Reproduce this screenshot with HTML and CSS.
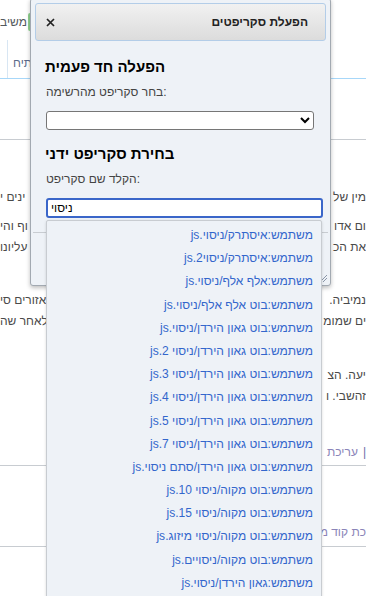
FILE: index.html
```html
<!DOCTYPE html>
<html lang="he">

<head>
  <meta charset="UTF-8">
  <meta name="viewport" content="width=device-width, initial-scale=1.0">
  <title>הפעלת סקריפטים</title>
  <link rel="stylesheet" href="styles.css">
</head>

<body>

  <!-- the wiki page behind the dialog -->
  <div class="page" dir="rtl">
    <div class="personal">
      <span class="badge">5</span>
      <span class="personal-link">משיב</span>
    </div>

    <div class="tabs">
      <span class="tab">פתיח</span>
    </div>

    <div class="title-rule"></div>

    <div class="para first">
      <div class="row"><span>מין של</span><span>ינים י</span></div>
    </div>
    <div class="para second">
      <div class="row"><span>ום אדו</span><span>וף והי</span></div>
      <div class="row"><span>את הכ</span><span>עליונו</span></div>
    </div>
    <div class="para third">
      <div class="row"><span>נמיביה.</span><span>אזורים סי</span></div>
      <div class="row"><span>ים שמומ</span><span>לאחר שה</span></div>
    </div>
    <div class="para fourth">
      <div class="row"><span>יעה. הצ</span><span></span></div>
      <div class="row"><span>זהשבי. ו</span><span></span></div>
    </div>

    <div class="edit-row">
      <span class="sep">|</span><span class="edit-link">עריכת</span>
    </div>

    <div class="footer-row">
      <span class="edit-link">כת קוד מ</span>
    </div>
  </div>

  <!-- run scripts dialog -->
  <div class="dialog">
    <div class="titlebar" dir="rtl">
      <span class="dialog-title">הפעלת סקריפטים</span>
      <button class="close-btn" title="סגירה">
        <svg width="9" height="9" viewBox="0 0 9 9">
          <path d="M1 1 L8 8 M8 1 L1 8" stroke="#222" stroke-width="1.7" fill="none" />
        </svg>
      </button>
    </div>

    <div class="dialog-content">
      <h3>הפעלה חד פעמית</h3>
      <label for="scriptSelect">בחר סקריפט מהרשימה:</label>
      <select id="scriptSelect" class="script-select">
        <option></option>
      </select>

      <h3 class="second-heading">בחירת סקריפט ידני</h3>
      <label for="scriptName">הקלד שם סקריפט:</label>
      <input type="text" id="scriptName" class="script-input" value="ניסוי">
    </div>

    <div class="buttonpane"></div>

    <svg class="resize-grip" width="9" height="9" viewBox="0 0 9 9">
      <path d="M1 8 L8 1 M4 8 L8 4" stroke="#8a96a8" stroke-width="1" fill="none" />
    </svg>
  </div>

  <!-- autocomplete suggestions -->
  <ul class="suggestions" dir="rtl">
    <li>משתמש:איסתרק/ניסוי.js</li>
    <li>משתמש:איסתרק/ניסוי2.js</li>
    <li>משתמש:אלף אלף/ניסוי.js</li>
    <li>משתמש:בוט אלף אלף/ניסוי.js</li>
    <li>משתמש:בוט גאון הירדן/ניסוי.js</li>
    <li>משתמש:בוט גאון הירדן/ניסוי 2.js</li>
    <li>משתמש:בוט גאון הירדן/ניסוי 3.js</li>
    <li>משתמש:בוט גאון הירדן/ניסוי 4.js</li>
    <li>משתמש:בוט גאון הירדן/ניסוי 5.js</li>
    <li>משתמש:בוט גאון הירדן/ניסוי 7.js</li>
    <li>משתמש:בוט גאון הירדן/סתם ניסוי.js</li>
    <li>משתמש:בוט מקוה/ניסוי 10.js</li>
    <li>משתמש:בוט מקוה/ניסוי 15.js</li>
    <li>משתמש:בוט מקוה/ניסוי מיזוג.js</li>
    <li>משתמש:בוט מקוה/ניסויים.js</li>
    <li>משתמש:גאון הירדן/ניסוי.js</li>
  </ul>

</body>

</html>
```

FILE: styles.css
```css
body {
  margin: 0;
  width: 366px;
  height: 596px;
  overflow: hidden;
  position: relative;
  background: #fff;
  font-family: "Liberation Sans", Arial, "DejaVu Sans", sans-serif;
  color: #202122;
}

/* page behind */

.page {
  font-size: 12px;
  color: #4a4a4a;
}

.personal {
  height: 40px;
  display: flex;
  justify-content: flex-end;
  align-items: flex-start;
  padding-top: 13px;
  box-sizing: border-box;
  font-size: 12px;
}

.personal-link {
  color: #54595d;
  line-height: 18px;
}

.badge {
  background: #8fd18f;
  color: #fff;
  font-size: 11px;
  font-weight: bold;
  line-height: 18px;
  padding: 0 4px;
  margin-left: 1px;
  border-radius: 2px;
}

.tabs {
  height: 38px;
  display: flex;
  justify-content: flex-end;
  border-bottom: 1px solid #a7d7f9;
}

.tab {
  margin-left: 7px;
  padding: 15px 0 0 5px;
  border-left: 1px solid #d8e6f3;
  font-size: 12px;
  line-height: 16px;
  color: #5a6a8a;
}

.title-rule {
  height: 60px;
  border-bottom: 1px solid #c8ccd1;
}

.row {
  display: flex;
  justify-content: space-between;
  line-height: 21px;
  white-space: nowrap;
}

.para.first {
  margin-top: 47px;
}

.para.second {
  margin-top: 8px;
}

.para.third {
  margin-top: 32px;
}

.para.fourth {
  margin-top: 33px;
}

.edit-row {
  margin-top: 35px;
  padding-bottom: 2px;
  border-bottom: 1px solid #c8ccd1;
  line-height: 21px;
}

.sep {
  color: #6b6fa8;
  margin-left: 5px;
}

.edit-link {
  color: #8a84b8;
}

.footer-row {
  margin-top: 56px;
  padding-bottom: 3px;
  border-bottom: 1px solid #c8ccd1;
  line-height: 21px;
}

/* dialog */

.dialog {
  position: absolute;
  left: 30px;
  top: -2px;
  width: 301px;
  height: 288px;
  box-sizing: border-box;
  padding: 4px;
  background: #eef2f7;
  border: 1px solid #a2a9b1;
  border-radius: 3px;
  box-shadow: 0 2px 4px rgba(0, 0, 0, 0.25);
  display: flex;
  flex-direction: column;
}

.titlebar {
  height: 38px;
  box-sizing: border-box;
  display: flex;
  justify-content: space-between;
  align-items: center;
  padding: 0 17px 0 10px;
  border: 1px solid #b3cde8;
  border-radius: 3px;
  background: linear-gradient(#f1f1f1, #dcdcdc);
}

.dialog-title {
  font-size: 12px;
  font-weight: bold;
  color: #222;
}

.close-btn {
  background: none;
  border: none;
  padding: 0;
  width: 9px;
  height: 9px;
  display: flex;
  cursor: pointer;
}

.dialog-content {
  padding: 0 3px 0 11px;
  display: flex;
  flex-direction: column;
  align-items: flex-start;
}

.dialog-content h3 {
  margin: 16px 0 0 -1px;
  font-size: 15px;
  line-height: 19px;
  color: #000;
}

.dialog-content h3.second-heading {
  margin-top: 14px;
}

.dialog-content label {
  margin-top: 7px;
  font-size: 12px;
  line-height: 18px;
  color: #444;
}

.script-select {
  margin-top: 10px;
  width: 268px;
  height: 19px;
  font-size: 12px;
  border: 1px solid #767676;
  border-radius: 3px;
  background: #fff;
}

.script-input {
  margin-top: 10px;
  width: 100%;
  height: 20px;
  box-sizing: border-box;
  padding: 0 3px;
  font-family: inherit;
  font-size: 12px;
  color: #000;
  border: 2px solid #3a66c9;
  border-radius: 3px;
  outline: none;
}

.buttonpane {
  margin: 14px -2px 0;
  flex: 1;
  border-top: 1px solid #c8ccd1;
}

.resize-grip {
  position: absolute;
  right: 2px;
  bottom: 2px;
}

/* autocomplete list */

.suggestions {
  position: absolute;
  left: 46px;
  top: 220px;
  width: 276px;
  height: 400px;
  box-sizing: border-box;
  margin: 0;
  padding: 3px 0 0;
  list-style: none;
  background: #eef2f7;
  border: 1px solid #c8ccd1;
  border-radius: 2px;
  box-shadow: 0 1px 3px rgba(0, 0, 0, 0.15);
}

.suggestions li {
  height: 23.2px;
  line-height: 23.2px;
  padding: 0 8px;
  font-size: 12px;
  color: #3366cc;
  white-space: nowrap;
}
```
